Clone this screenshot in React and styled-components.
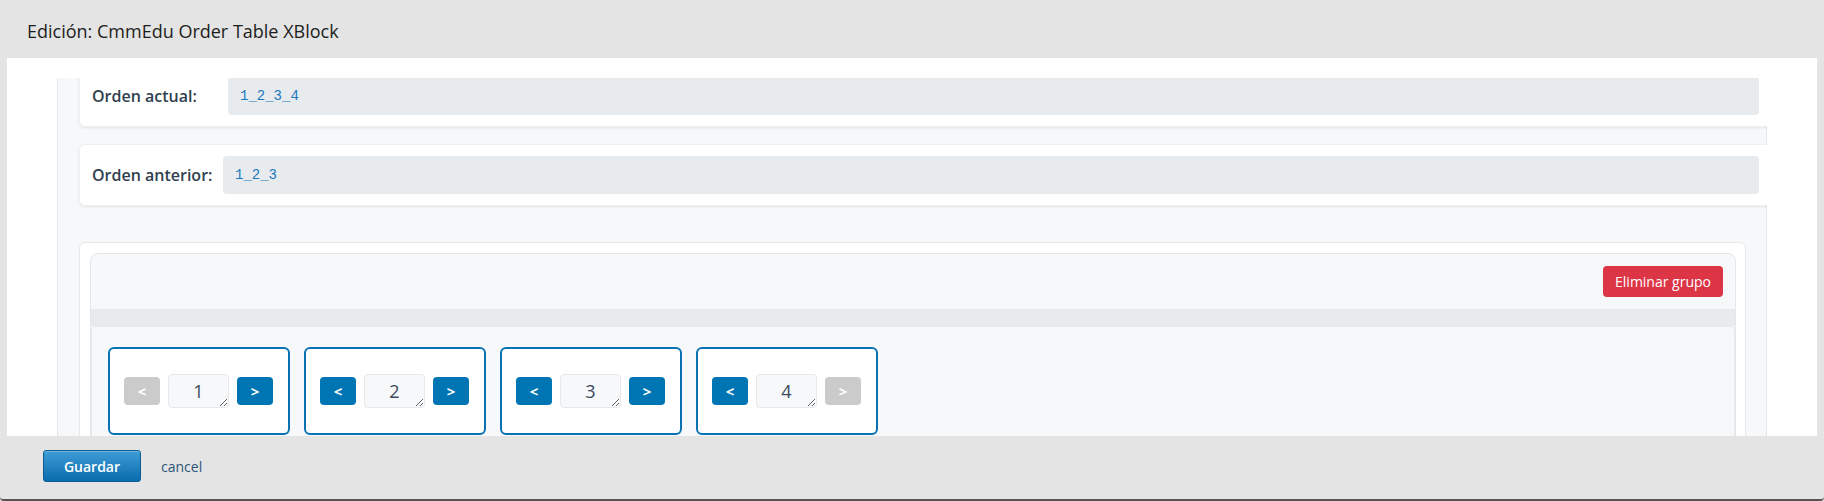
import React from "react";
import styled, { createGlobalStyle } from "styled-components";

const GlobalStyle = createGlobalStyle`
  html, body {
    margin: 0;
    padding: 0;
    background: #e4e4e4;
    font-family: "Open Sans", "Noto Sans", sans-serif;
  }
  * { box-sizing: border-box; }
`;

const items = [
  { n: 1, prev: false, next: true },
  { n: 2, prev: true, next: true },
  { n: 3, prev: true, next: true },
  { n: 4, prev: true, next: false },
];

function OrderItem({ item }) {
  return (
    <ItemCard>
      <MoveButton active={item.prev}>&lt;</MoveButton>
      <NumberBox defaultValue={item.n} rows={1} />
      <MoveButton active={item.next}>&gt;</MoveButton>
    </ItemCard>
  );
}

function App() {
  return (
    <Modal>
      <GlobalStyle />
      <Header>
        <Title>Edición: CmmEdu Order Table XBlock</Title>
      </Header>

      <Content>
        <Viewport>
          <Editor>
            <InfoCard>
              <Label width="136px">Orden actual:</Label>
              <Value>
                <code>1_2_3_4</code>
              </Value>
            </InfoCard>
            <InfoCard>
              <Label width="131px">Orden anterior:</Label>
              <Value>
                <code>1_2_3</code>
              </Value>
            </InfoCard>

            <GroupWrap>
              <Group>
                <GroupHead>
                  <DangerButton>Eliminar grupo</DangerButton>
                </GroupHead>
                <GroupStrip />
                <GroupBody>
                  {items.map((it) => (
                    <OrderItem key={it.n} item={it} />
                  ))}
                </GroupBody>
              </Group>
            </GroupWrap>
          </Editor>
        </Viewport>
      </Content>

      <Footer>
        <SaveButton>Guardar</SaveButton>
        <CancelLink href="#">cancel</CancelLink>
      </Footer>
    </Modal>
  );
}

export default App;

const Modal = styled.div`
  width: 100vw;
  height: 501px;
  display: flex;
  flex-direction: column;
  background: #e4e4e4;
  border-bottom: 2px solid #555;
  border-radius: 2px 2px 4px 4px;
  overflow: hidden;
`;

const Header = styled.div`
  height: 58px;
  flex-shrink: 0;
  display: flex;
  align-items: center;
  padding: 3px 0 0 27px;
`;

const Title = styled.h2`
  margin: 0;
  font-size: 18px;
  font-weight: 400;
  color: #1d1d1d;
`;

const Content = styled.div`
  height: 378px;
  flex-shrink: 0;
  margin: 0 7px;
  background: #fff;
  padding: 20px 50px 0 50px;
  overflow: hidden;
`;

const Viewport = styled.div`
  height: 358px;
  overflow: hidden;
`;

const Editor = styled.div`
  margin-top: -13px;
  padding: 0 0 40px 21px;
  background: #f7f8fa;
  border-left: 1px solid #e3e6ea;
  border-right: 1px solid #e3e6ea;
`;

const InfoCard = styled.div`
  display: flex;
  align-items: center;
  margin: 0 -6px 17px 0;
  padding: 11px 12px;
  background: #fff;
  border: 1px solid #eef0f2;
  border-radius: 6px;
  box-shadow: 0 1px 3px rgba(0, 0, 0, 0.08);
`;

const Label = styled.span`
  width: ${(props) => props.width};
  flex-shrink: 0;
  font-size: 16px;
  font-weight: 600;
  color: #313f50;
`;

const Value = styled.div`
  flex: 1;
  height: 38px;
  display: flex;
  align-items: center;
  padding: 0 12px;
  background: #e8ebee;
  border-radius: 4px;

  code {
    font-family: "Liberation Mono", "DejaVu Sans Mono", monospace;
    font-size: 14px;
    color: #1a78bd;
  }
`;

const GroupWrap = styled.div`
  margin: 36px 20px 0 0;
  padding: 10px 9px 0 10px;
  background: #fff;
  border: 1px solid #e6e9ec;
  border-radius: 6px;
`;

const Group = styled.div`
  background: #f7f8fa;
  border: 1px solid #e3e6ea;
  border-radius: 8px;
`;

const GroupHead = styled.div`
  display: flex;
  justify-content: flex-end;
  padding: 12px 12px;
`;

const DangerButton = styled.button`
  height: 31px;
  padding: 0 12px;
  border: none;
  border-radius: 4px;
  background: #dc3545;
  color: #fff;
  font-family: inherit;
  font-size: 14px;
  cursor: pointer;
`;

const GroupStrip = styled.div`
  height: 17px;
  background: #e8ebee;
`;

const GroupBody = styled.div`
  display: flex;
  gap: 14px;
  padding: 20px 16px 40px;
  background: #f7f8fa;
  border: 1px solid #e6e9ec;
  border-radius: 4px 4px 0 0;
`;

const ItemCard = styled.div`
  width: 182px;
  height: 88px;
  display: flex;
  align-items: center;
  gap: 8px;
  padding: 0 14px;
  background: #fff;
  border: 2px solid #0a72b3;
  border-radius: 6px;
`;

const MoveButton = styled.button`
  width: 36px;
  height: 28px;
  flex-shrink: 0;
  padding: 0;
  border: none;
  border-radius: 4px;
  background: ${(props) => (props.active ? "#0075b4" : "#cbcbcb")};
  color: #fff;
  font-family: inherit;
  font-size: 15px;
  font-weight: 700;
  cursor: pointer;
`;

const NumberBox = styled.textarea`
  width: 61px;
  height: 34px;
  flex-shrink: 0;
  padding: 4px 6px;
  background: #f7f8fa;
  border: 1px solid #e6e9ec;
  border-radius: 4px;
  font-family: "Open Sans", sans-serif;
  font-size: 18px;
  line-height: 24px;
  text-align: center;
  color: #3b4a5c;
  overflow: hidden;
  resize: both;
`;

const Footer = styled.div`
  flex: 1;
  display: flex;
  align-items: center;
  gap: 20px;
  padding: 0 0 3px 43px;
`;

const SaveButton = styled.button`
  width: 98px;
  height: 32px;
  border: 1px solid #0b5d94;
  border-radius: 3px;
  background: linear-gradient(to bottom, #3e9cd6, #0a6cae);
  box-shadow: inset 0 1px 0 rgba(255, 255, 255, 0.25);
  color: #fff;
  font-family: inherit;
  font-size: 14px;
  font-weight: 600;
  cursor: pointer;
`;

const CancelLink = styled.a`
  font-size: 14px;
  color: #2c5678;
  text-decoration: none;
`;
